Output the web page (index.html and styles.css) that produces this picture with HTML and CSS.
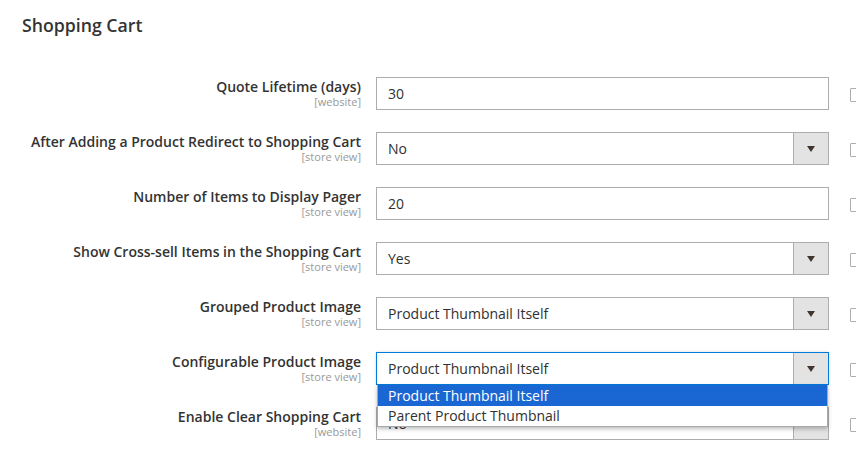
FILE: index.html
```html
<!DOCTYPE html>
<html>
<head>
<meta charset="utf-8">
<link rel="stylesheet" href="styles.css">
</head>
<body>
<div class="page">
  <h2 class="title">Shopping Cart</h2>
  <div class="rows">
    <div class="row">
      <div class="label"><span class="name">Quote Lifetime (days)</span><span class="scope">[website]</span></div>
      <div class="control"><div class="input">30</div></div>
      <span class="check"></span>
    </div>
    <div class="row">
      <div class="label"><span class="name">After Adding a Product Redirect to Shopping Cart</span><span class="scope">[store view]</span></div>
      <div class="control"><div class="select"><span class="value">No</span><span class="arrow"></span></div></div>
      <span class="check"></span>
    </div>
    <div class="row">
      <div class="label"><span class="name">Number of Items to Display Pager</span><span class="scope">[store view]</span></div>
      <div class="control"><div class="input">20</div></div>
      <span class="check"></span>
    </div>
    <div class="row">
      <div class="label"><span class="name">Show Cross-sell Items in the Shopping Cart</span><span class="scope">[store view]</span></div>
      <div class="control"><div class="select"><span class="value">Yes</span><span class="arrow"></span></div></div>
      <span class="check"></span>
    </div>
    <div class="row">
      <div class="label"><span class="name">Grouped Product Image</span><span class="scope">[store view]</span></div>
      <div class="control"><div class="select"><span class="value">Product Thumbnail Itself</span><span class="arrow"></span></div></div>
      <span class="check"></span>
    </div>
    <div class="row">
      <div class="label"><span class="name">Configurable Product Image</span><span class="scope">[store view]</span></div>
      <div class="control">
        <div class="select focused"><span class="value">Product Thumbnail Itself</span><span class="arrow"></span></div>
        <ul class="dropdown">
          <li class="option selected">Product Thumbnail Itself</li>
          <li class="option">Parent Product Thumbnail</li>
        </ul>
      </div>
      <span class="check"></span>
    </div>
    <div class="row">
      <div class="label"><span class="name">Enable Clear Shopping Cart</span><span class="scope">[website]</span></div>
      <div class="control"><div class="select"><span class="value">No</span><span class="arrow"></span></div></div>
      <span class="check"></span>
    </div>
  </div>
</div>
</body>
</html>
```
FILE: styles.css
```css
html, body {
  margin: 0;
  padding: 0;
  background: #ffffff;
  overflow: hidden;
}
.page {
  width: 856px;
  height: 452px;
  font-family: "Open Sans", "Noto Sans", sans-serif;
  color: #303030;
  overflow: hidden;
}
.title {
  margin: 0;
  padding: 13px 0 0 22px;
  font-size: 17.7px;
  font-weight: 600;
  line-height: 24px;
  color: #333333;
}
.rows {
  display: flex;
  flex-direction: column;
  gap: 22px;
  padding-top: 40px;
}
.row {
  display: flex;
  align-items: flex-start;
}
.label {
  width: 361px;
  flex: none;
  display: flex;
  flex-direction: column;
  align-items: flex-end;
  text-align: right;
}
.name {
  font-size: 14px;
  font-weight: 600;
  line-height: 17px;
  color: #333333;
  margin-top: 1px;
}
.scope {
  font-size: 11px;
  line-height: 12px;
  color: #999999;
  margin-top: 1px;
}
.control {
  position: relative;
  margin-left: 15px;
  width: 453px;
  flex: none;
}
.input, .select {
  box-sizing: border-box;
  height: 33px;
  border: 1px solid #adadad;
  background: #ffffff;
  font-size: 14px;
  line-height: 31px;
  color: #303030;
  padding-left: 11px;
}
.select {
  display: flex;
  justify-content: space-between;
  padding-right: 0;
}
.select.focused {
  border-color: #007bdb;
  box-shadow: 0 0 3px rgba(0, 0, 0, 0.15);
}
.arrow {
  width: 34px;
  height: 31px;
  flex: none;
  background: #e3e3e3;
  border-left: 1px solid #adadad;
  display: flex;
  align-items: center;
  justify-content: center;
}
.arrow::after {
  content: "";
  width: 0;
  height: 0;
  border-left: 4.5px solid transparent;
  border-right: 4.5px solid transparent;
  border-top: 6px solid #41362f;
}
.check {
  flex: none;
  box-sizing: border-box;
  width: 14px;
  height: 14px;
  margin-left: 21px;
  margin-top: 11px;
  border: 1px solid #adadad;
  border-radius: 1px;
  background: #fff;
}
.dropdown {
  position: absolute;
  top: 33px;
  left: 1px;
  right: 1px;
  margin: 0;
  padding: 0;
  list-style: none;
  background: #ffffff;
  border: 1px solid #a8a8a8;
  border-top: none;
  box-shadow: 0 2px 4px rgba(0, 0, 0, 0.25);
  z-index: 5;
}
.option {
  height: 20px;
  line-height: 20px;
  font-size: 14px;
  padding-left: 10px;
  color: #303030;
}
.option.selected {
  background: #1a66d2;
  color: #ffffff;
  height: 21px;
  line-height: 21px;
}
```
